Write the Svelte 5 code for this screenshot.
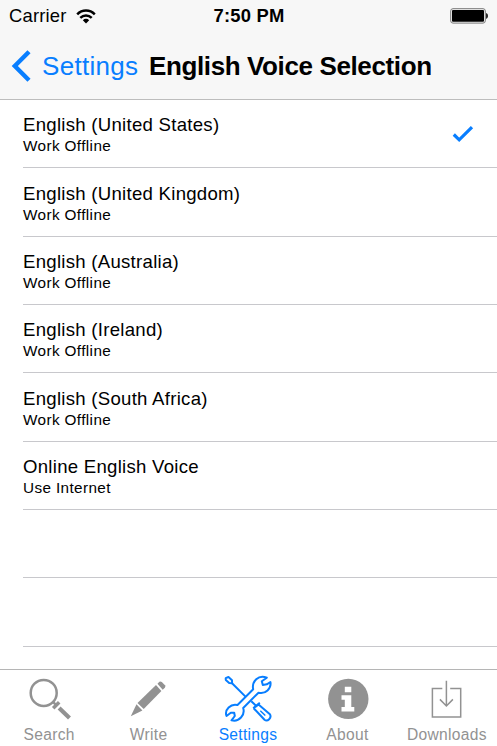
<script lang="ts">
  type Voice = { name: string; detail: string };

  const voices: Voice[] = [
    { name: "English (United States)", detail: "Work Offline" },
    { name: "English (United Kingdom)", detail: "Work Offline" },
    { name: "English (Australia)", detail: "Work Offline" },
    { name: "English (Ireland)", detail: "Work Offline" },
    { name: "English (South Africa)", detail: "Work Offline" },
    { name: "Online English Voice", detail: "Use Internet" },
  ];
  const tabs = ["Search", "Write", "Settings", "About", "Downloads"];
  const emptyRows = [0, 1];

  let selectedVoice = $state(0);
  let activeTab = $state("Settings");
</script>

<div class="screen">
  <header>
    <div class="statusBar">
      <div class="carrier">
        <span>Carrier</span>
        <svg width="20" height="15" viewBox="0 0 20 15" fill="none" stroke="#000" stroke-width="2.5">
          <path d="M1.2 5.3C6.2 .3 13.8 .3 18.8 5.3" />
          <path d="M4.3 8.8C7.6 5.6 12.4 5.6 15.7 8.8" />
          <path d="M6.8 11.2C8.7 9.4 11.3 9.4 13.2 11.2L10 14.4Z" fill="#000" stroke="none" />
        </svg>
      </div>
      <span class="time">7:50 PM</span>
      <svg class="battery" width="39" height="16" viewBox="0 0 39 16">
        <rect x=".7" y=".7" width="34.6" height="14.4" rx="2.3" fill="none" stroke="#777" stroke-width="1" />
        <rect x="2" y="2" width="32" height="11.8" rx="1" />
        <path d="M36.2 5C38.4 5.6 38.4 10.2 36.2 10.8Z" />
      </svg>
    </div>
    <nav>
      <button class="back">
        <svg width="20" height="32" viewBox="0 0 20 32" fill="none" stroke="#087eff" stroke-width="4.4">
          <path d="M18 1.7L3.8 16L18 30.3" />
        </svg>
        <span>Settings</span>
      </button>
      <h1>English Voice Selection</h1>
    </nav>
  </header>

  <main>
    {#each voices as voice, i}
      <button class="row" onclick={() => (selectedVoice = i)}>
        <span class="rowText">
          <span class="name">{voice.name}</span>
          <span class="detail">{voice.detail}</span>
        </span>
        {#if selectedVoice === i}
          <svg width="22" height="18" viewBox="0 0 22 18" fill="none" stroke="#087eff" stroke-width="3.2">
            <path d="M1.8 9.5L7.2 14.8L20 2.1" />
          </svg>
        {/if}
      </button>
    {/each}
    {#each emptyRows as _}
      <div class="row"></div>
    {/each}
  </main>

  <footer>
    {#each tabs as tab}
      <button class="tab" class:active={activeTab === tab} onclick={() => (activeTab = tab)}>
        <svg width="50" height="55" viewBox="0 -5 50 55" fill="none" stroke="currentColor">
          {#if tab === "Search"}
            <circle cx="18.7" cy="13.9" r="13" stroke-width="2.5" />
            <path d="M28.2 23.2L30.7 25.7" stroke-width="2.5" />
            <path d="M28.2 29.2L34.2 23.2" stroke-width="3.5" />
            <path d="M34.1 29L44.5 39" stroke-width="4.2" />
          {:else if tab === "Write"}
            <g fill="currentColor" stroke="none">
              <path d="M33.5 4.8L35.4 2.7Q36.6 2 37.8 3.1L41 6.2Q41.9 7.5 40.8 8.7L38.7 10.7Z" />
              <path d="M32 6.1L37.4 12.1L19.7 30.1L13.5 24Z" />
              <path d="M12.5 25.3L18.4 31.4L6.8 37.3Z" />
            </g>
          {:else if tab === "Settings"}
            <g stroke-width="2" stroke-linejoin="round">
              <path d="M42.8 -1.3L37.8 2.3L38.8 6L42.8 5.3L46.4 3C47.6 9.3 41.5 15.6 34.5 13.7L19.2 29C21.4 36 15 43.3 7.5 41.3L10.8 37L10.2 33.7L6.8 33.7L2.5 37C.2 30.8 6.8 24.2 13.5 26L29.2 10.3C27.5 2.8 34.5 -5 42.8 -1.3Z" />
              <path d="M1.7 -.8L4.5 -2L8 1.2L8.1 4.2L5.2 4.1L1.8 1Z" />
              <path d="M7.8 4L22 18.1M27.3 22.3L32.6 27.3" />
              <path d="M29.2 29.2L35.8 23.8" />
              <path d="M31 28.2L34.5 25.5L45.9 35.3C48 38.8 43.6 43.1 40.5 40.8L29.7 29.2" />
              <path d="M36.3 31.7L41.3 36.5" stroke-width="1.4" />
            </g>
          {:else if tab === "About"}
            <circle cx="25.3" cy="19.9" r="20.2" fill="currentColor" stroke="none" />
            <path d="M21.8 7.7H28.3V13.3H21.8ZM18.5 16.3H28.3V28.1H31.3V32.6H18.5V28.1H21.8V20.8H18.5Z" fill="#fff" stroke="none" />
          {:else}
            <g stroke-width="1.5">
              <path d="M20.3 9.6H10.4V38.1H38.7V9.6H28.2" />
              <path d="M24.4 1.8V27M17.9 20.4L24.4 27L30.9 20.4" />
            </g>
          {/if}
        </svg>
        <span>{tab}</span>
      </button>
    {/each}
  </footer>
</div>

<style>
  :global(body) {
    margin: 0;
    background: #fff;
  }

  .screen {
    display: flex;
    flex-direction: column;
    width: 497px;
    height: 746px;
    overflow: hidden;
    color: #000;
    font-family: "Liberation Sans", Arial, sans-serif;
  }

  button {
    padding: 0;
    border: 0;
    background: none;
    font: inherit;
    color: inherit;
    text-align: left;
    cursor: pointer;
  }

  svg {
    display: block;
    flex-shrink: 0;
  }

  header {
    height: 99px;
    flex-shrink: 0;
    background: #f7f7f7;
    border-bottom: 1px solid #bdbdbd;
  }

  .statusBar {
    display: grid;
    grid-template-columns: 1fr auto 1fr;
    align-items: center;
    height: 32px;
    padding: 0 8px 0 9px;
    font-size: 18.4px;
    line-height: 32px;
  }

  .carrier {
    display: flex;
    align-items: center;
    gap: 9px;
    letter-spacing: 0.2px;
  }

  .time {
    font-weight: bold;
    letter-spacing: 0.2px;
  }

  .battery {
    justify-self: end;
  }

  nav {
    display: flex;
    align-items: center;
    height: 67px;
    padding-left: 11px;
  }

  .back {
    display: flex;
    align-items: center;
    width: 138px;
    gap: 11px;
    color: #087eff;
    font-size: 26px;
    letter-spacing: 0.3px;
  }

  .back span {
    padding-top: 1px;
  }

  h1 {
    margin: 0;
    font-size: 26px;
    line-height: 32px;
    letter-spacing: -0.38px;
    white-space: nowrap;
  }

  main {
    flex: 1;
    min-height: 0;
    overflow: hidden;
    padding-left: 23px;
  }

  .row {
    display: flex;
    align-items: center;
    justify-content: space-between;
    box-sizing: border-box;
    width: 100%;
    height: 68.35px;
    padding-right: 23px;
    border-bottom: 1px solid #c8c8cc;
  }

  .rowText {
    display: flex;
    flex-direction: column;
    padding-top: 2px;
  }

  .name {
    font-size: 18.6px;
    line-height: 23px;
    letter-spacing: 0.27px;
  }

  .detail {
    font-size: 15.3px;
    line-height: 20px;
    letter-spacing: 0.38px;
  }

  footer {
    display: flex;
    height: 76px;
    flex-shrink: 0;
    background: #fff;
    border-top: 1px solid #b5b5b5;
  }

  .tab {
    display: flex;
    flex: 1 1 0;
    flex-direction: column;
    align-items: center;
    padding-top: 4px;
    box-sizing: border-box;
    color: #929292;
    font-size: 15.6px;
    line-height: 18px;
    letter-spacing: 0.3px;
  }

  .tab span {
    margin-top: -3px;
    margin-left: -1px;
  }

  .active {
    color: #087eff;
  }
</style>
